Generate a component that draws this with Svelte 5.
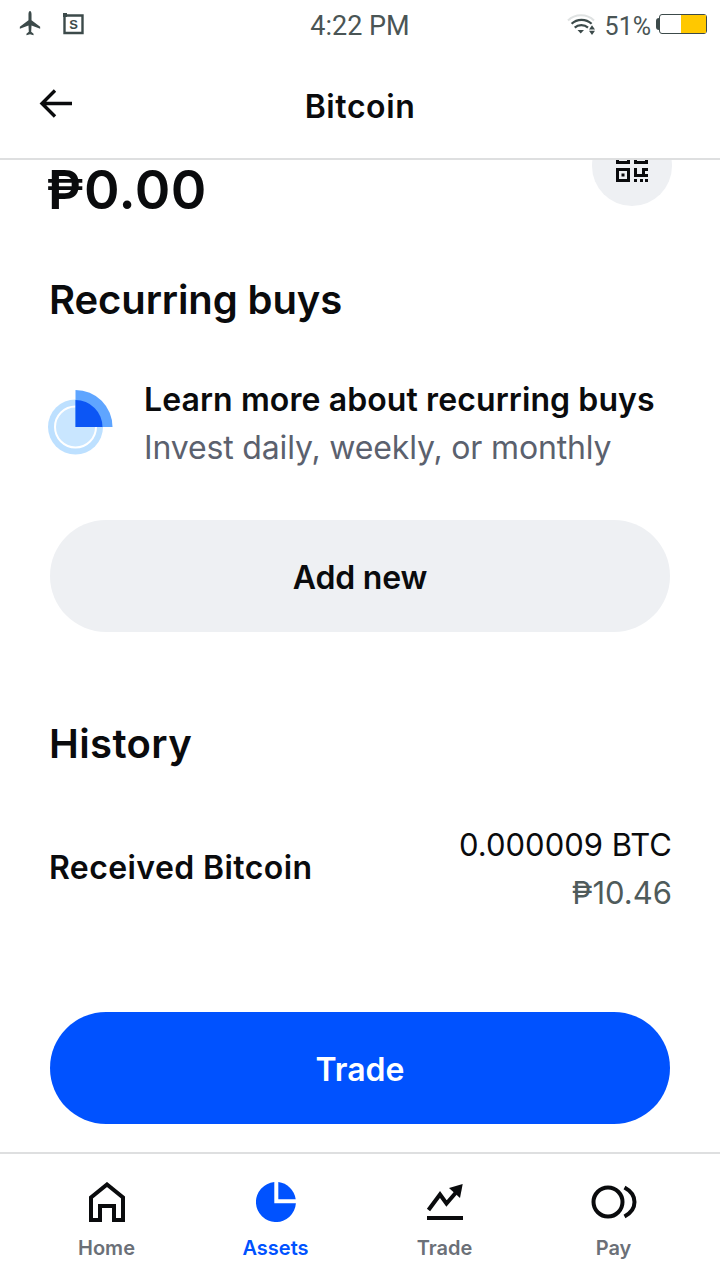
<script>
  const navItems = [
    { id: "home", label: "Home" },
    { id: "assets", label: "Assets" },
    { id: "trade", label: "Trade" },
    { id: "pay", label: "Pay" }
  ];
</script>

<div class="screen">
  <div class="status">
    <div class="status-left">
      <svg width="22" height="26" viewBox="0 0 26 28" preserveAspectRatio="none">
        <path fill="#3c4a4a" d="M13 0c1.100 0 1.800 1.800 1.800 3.500V10l10.200 7v2l-10.200-3.300-.4 6.600 2.800 2.200V26l-4.200-1-4.200 1v-1.500l2.800-2.200-.4-6.600L1 19v-2l10.200-7V3.500C11.200 1.800 11.900 0 13 0z"/>
      </svg>
      <svg width="21" height="22" viewBox="0 0 21 22">
        <path fill="none" stroke="#3c4a4a" stroke-width="2.400" d="M1.500 2.500h18v17.500h-18z"/>
        <rect x="0" y="0" width="4" height="4" fill="#3c4a4a"/>
        <text x="10.500" y="16" text-anchor="middle" class="sim-s">S</text>
      </svg>
    </div>
    <div class="clock">4:22 PM</div>
    <div class="status-right">
      <svg class="wifi" width="30" height="22" viewBox="0 0 30 22">
        <path fill="none" stroke="#dfe2e2" stroke-width="2" d="M1 6.500C8 -.5 20 -.5 27 6.500"/>
        <path fill="none" stroke="#3c4a4a" stroke-width="2.200" d="M4.600 9.800C10 4.500 19 4.500 24.600 9.800M7.700 13.600c3.500-3.200 9.800-3.200 13.300 0"/>
        <path fill="#3c4a4a" d="M10.500 16H17L13.700 19.500zM22 15.500h6L25 11.300zM22 16.700h6L25 21z"/>
      </svg>
      <span class="pct">51%</span>
      <div class="battery"><div class="battery-fill"></div></div>
    </div>
  </div>

  <header class="topbar">
    <svg width="36" height="36" viewBox="0 0 36 36">
      <path fill="none" stroke="#0a0b0d" stroke-width="3.400" d="M34 17.500H4M17 4.500 4 17.500l13 13"/>
    </svg>
    <h1>Bitcoin</h1>
  </header>

  <main class="content">
    <div class="balance-row">
      <div class="balance">₱0.00</div>
      <div class="qr">
        <svg width="32" height="32" viewBox="0 0 32 32">
          <path fill="#0a0b0d" fill-rule="evenodd" d="M0 0h14v14H0zM3 3v8h8V3zM5.500 5.500h3v3h-3zM18 0h14v14H18zM21 3v8h8V3zM23.500 5.500h3v3h-3zM0 18h14v14H0zM3 21v8h8v-8zM5.500 23.500h3v3h-3zM18 18h3v6h5v-6h6v3h-3v6h-11zM18 29h3v3h-3zM24 29h3v3h-3zM29 29h3v3h-3zM29 24h3v3h-3z"/>
        </svg>
      </div>
    </div>

    <h2 class="recurring-title">Recurring buys</h2>

    <div class="promo">
      <svg class="promo-icon" width="66" height="66" viewBox="0 0 66 66">
        <circle cx="27.500" cy="37" r="27.500" fill="#bde0ff"/>
        <circle cx="27.500" cy="37" r="20.500" fill="#c9e6ff" stroke="#fff" stroke-width="2"/>
        <path fill="#5fa5ff" d="M27.500 0a37 37 0 0 1 37 37H27.500z"/>
        <path fill="#0c56f5" d="M27.500 10a27 27 0 0 1 27 27H27.500z"/>
      </svg>
      <div class="promo-text">
        <div class="promo-title">Learn more about recurring buys</div>
        <div class="promo-sub">Invest daily, weekly, or monthly</div>
      </div>
    </div>

    <button class="pill pill-grey">Add new</button>

    <h2 class="history-title">History</h2>

    <div class="tx">
      <div class="tx-name">Received Bitcoin</div>
      <div class="tx-amounts">
        <div class="tx-btc">0.000009 BTC</div>
        <div class="tx-php">₱10.46</div>
      </div>
    </div>
  </main>

  <div class="cta">
    <button class="pill pill-blue">Trade</button>
  </div>

  <nav class="tabs">
    {#each navItems as item}
      <div class="tab" class:active={item.id === "assets"}>
        <div class="tab-icon">
          {#if item.id === "home"}
            <svg width="36" height="40" viewBox="0 0 36 40">
              <path fill="none" stroke="#0a0b0d" stroke-width="4" d="M2 38V15.500L18 2.500l16 13V38h-9V24H11v14z"/>
            </svg>
          {:else if item.id === "assets"}
            <svg width="40" height="40" viewBox="0 0 40 40">
              <path fill="#0052ff" d="M18.300.1A20 20 0 1 0 39.900 21.300H18.300z"/>
              <path fill="#0052ff" d="M22.300.1A20 20 0 0 1 39.700 17.300H22.300z"/>
            </svg>
          {:else if item.id === "trade"}
            <svg width="38" height="38" viewBox="0 0 38 38">
              <path fill="none" stroke="#0a0b0d" stroke-width="4" d="M2.500 27 14 11.500l6.500 9L33 6"/>
              <path fill="#0a0b0d" d="M23 5 36.700 1 34 15z"/>
              <rect x="1" y="33" width="36" height="4" fill="#0a0b0d"/>
            </svg>
          {:else}
            <svg width="46" height="36" viewBox="0 0 46 36">
              <circle cx="17" cy="18" r="14.500" fill="none" stroke="#0a0b0d" stroke-width="4"/>
              <path fill="none" stroke="#0a0b0d" stroke-width="4" d="M33.500 3.500C40 7 43.500 12 43.500 18S40 29 33.500 32.500"/>
            </svg>
          {/if}
        </div>
        <span>{item.label}</span>
      </div>
    {/each}
  </nav>
</div>

<style>
  :global(body) {
    margin: 0;
    background: #fff;
  }

  .screen {
    width: 720px;
    height: 1280px;
    display: flex;
    flex-direction: column;
    overflow: hidden;
    font-family: Inter, "Noto Sans", sans-serif;
    color: #0a0b0d;
    background: #fff;
  }

  .status {
    height: 52px;
    flex: none;
    display: flex;
    align-items: center;
    justify-content: space-between;
    padding: 0 13px 0 19px;
    position: relative;
  }

  .status-left {
    display: flex;
    align-items: center;
    gap: 22px;
    margin-top: -4px;
  }

  .sim-s {
    font: 700 13px "Liberation Sans", sans-serif;
    fill: #3c4a4a;
  }

  .clock {
    position: absolute;
    left: 0;
    right: 0;
    text-align: center;
    font: 400 27px Roboto, sans-serif;
    color: #4a5555;
  }

  .status-right {
    display: flex;
    align-items: center;
    gap: 8px;
  }

  .wifi {
    margin-top: -3px;
  }

  .pct {
    font: 400 25px Roboto, sans-serif;
    color: #4a5555;
  }

  .battery {
    width: 48px;
    height: 20px;
    margin-top: -4px;
    border: 1px solid #3c4a4a;
    border-radius: 3px;
    display: flex;
    justify-content: flex-end;
    position: relative;
    box-sizing: border-box;
  }

  .battery::before {
    content: "";
    position: absolute;
    left: -4px;
    top: 3px;
    width: 3px;
    height: 12px;
    background: #3c4a4a;
    border-radius: 3px 0 0 3px;
  }

  .battery-fill {
    width: 25px;
    background: #ffc800;
  }

  .topbar {
    height: 106px;
    flex: none;
    display: flex;
    align-items: center;
    justify-content: center;
    position: relative;
    border-bottom: 2px solid #dedfe0;
    background: #fff;
    z-index: 1;
  }

  .topbar svg {
    position: absolute;
    left: 38px;
    top: 34px;
  }

  h1 {
    margin: 2px 0 0;
    font-size: 32px;
    font-weight: 600;
    letter-spacing: 0.6px;
  }

  .content {
    flex: 1;
    min-height: 0;
    overflow: hidden;
    padding: 0 50px;
  }

  .balance-row {
    height: 46px;
    display: flex;
    justify-content: space-between;
    position: relative;
  }

  .balance {
    font-size: 54px;
    font-weight: 600;
    line-height: 60px;
    margin-left: -4px;
    letter-spacing: 0.4px;
  }

  .qr {
    position: absolute;
    right: -2px;
    top: -34px;
    width: 80px;
    height: 80px;
    border-radius: 50%;
    background: #eef0f3;
    display: flex;
    align-items: center;
    justify-content: center;
  }

  h2 {
    margin: 0 0 0 -1px;
    font-size: 40px;
    font-weight: 600;
    line-height: 46px;
  }

  .recurring-title {
    margin-top: 71px;
    letter-spacing: -0.1px;
  }

  .promo {
    margin-top: 53px;
    display: flex;
    align-items: center;
    gap: 31px;
    margin-left: -2px;
  }

  .promo-icon {
    margin-top: -2px;
  }

  .promo-title {
    font-size: 32px;
    font-weight: 600;
    line-height: 48px;
    letter-spacing: 0.1px;
    margin-left: -1px;
  }

  .promo-sub {
    font-size: 32px;
    line-height: 48px;
    color: #5b616e;
    letter-spacing: -0.15px;
    margin-left: -1px;
  }

  .pill {
    display: block;
    width: 620px;
    height: 112px;
    border: none;
    border-radius: 56px;
    font-family: inherit;
    font-size: 32px;
    font-weight: 600;
    padding: 2px 0 0;
  }

  .pill-grey {
    margin-top: 48px;
    background: #eef0f3;
    color: #0a0b0d;
    letter-spacing: -0.2px;
  }

  .history-title {
    margin-top: 89px;
    letter-spacing: 0.4px;
  }

  .tx {
    margin-top: 54px;
    display: flex;
    align-items: center;
    justify-content: space-between;
    margin-right: -2px;
  }

  .tx-name {
    margin-left: -1px;
    padding-bottom: 4px;
    font-size: 32px;
    font-weight: 600;
    letter-spacing: 0.4px;
  }

  .tx-amounts {
    text-align: right;
    font-size: 31px;
    line-height: 48px;
  }

  .tx-php {
    color: #4f5b5b;
  }

  .cta {
    flex: none;
    padding: 0 50px 28px;
  }

  .pill-blue {
    background: #0052ff;
    color: #fff;
  }

  .tabs {
    height: 126px;
    flex: none;
    border-top: 2px solid #dedfe0;
    display: grid;
    grid-template-columns: repeat(4, 169px);
    padding-left: 22px;
  }

  .tab {
    display: flex;
    flex-direction: column;
    align-items: center;
    font-size: 20px;
    font-weight: 600;
    color: #6b7078;
  }

  .tab-icon {
    height: 42px;
    margin-top: 27px;
    margin-bottom: 13px;
    display: flex;
    align-items: center;
  }

  .tab.active {
    color: #0052ff;
  }
</style>
